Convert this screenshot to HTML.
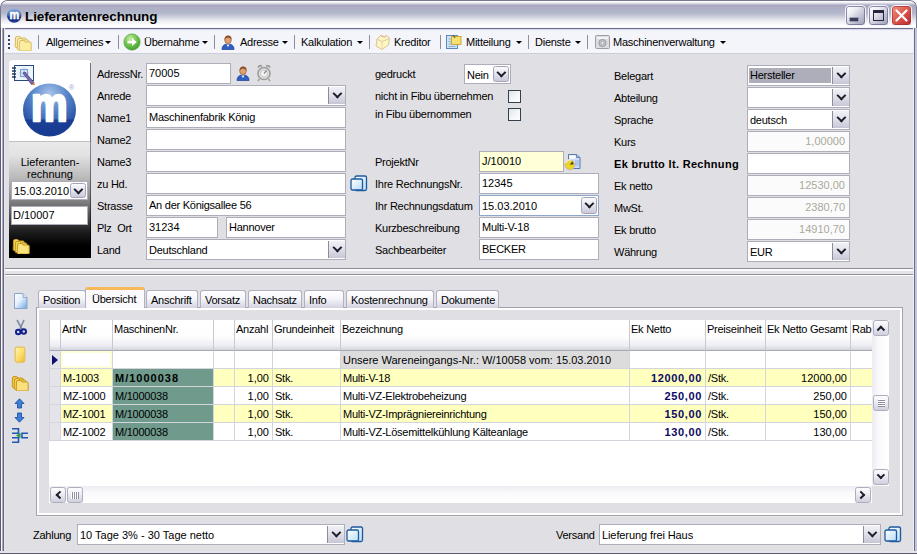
<!DOCTYPE html>
<html><head><meta charset="utf-8"><title>Lieferantenrechnung</title>
<style>
*{box-sizing:border-box;margin:0;padding:0}
html,body{width:917px;height:556px;overflow:hidden;background:#fff}
body{font-family:"Liberation Sans","DejaVu Sans",sans-serif;font-size:11px;color:#000;position:relative;letter-spacing:-0.25px}
.a{position:absolute}
#win{left:0;top:0;width:917px;height:554px;background:#e0dfe3;border-radius:7px 7px 0 0;overflow:hidden}
#frameL{left:0;top:0;width:5px;height:554px;background:linear-gradient(90deg,#5a5a70 0,#5a5a70 1px,#fafaff 1px,#fafaff 2px,#a8a8c0 2px,#a8a8c0 3px,#68687e 3px,#68687e 4px,#e6e6ea 4px)}
#frameR{left:913px;top:0;width:4px;height:554px;background:linear-gradient(90deg,#ececf5 0,#ececf5 1px,#6c6c84 1px,#6c6c84 2px,#c4c4da 2px)}
#frameB{left:0;top:551px;width:917px;height:3px;background:linear-gradient(180deg,#e4e4ea 0,#e4e4ea 2px,#5c5c6c 2px,#5c5c6c 3px)}
#title{left:0;top:0;width:917px;height:29px;border-radius:7px 7px 0 0;border:1px solid #77778e;border-bottom:none;background:linear-gradient(180deg,#fdfdfe 0,#fdfdfe 1px,#e0e0ec 2px,#bebed2 3.500px,#a6a6be 4.500px,#adadc6 6px,#b2b8ca 12px,#c4c6d6 14.500px,#d8d8e2 17px,#e9e9f0 19.500px,#f7f7fa 22.500px,#fff 24.500px,#fff 25.500px,#f0f0f6 27px,#70708a 27px,#70708a 28px)}
#title .t{left:24px;top:8px;font-weight:bold;font-size:13.5px;letter-spacing:-0.1px;color:#000;white-space:nowrap}
#tb{left:4px;top:29px;width:909px;height:25px;background:linear-gradient(180deg,#d6d6ea 0,#d6d6ea 1px,#f1f1f9 1.500px,#f4f4fb 3px,#f4f4fb 21px,#f8f8fe 23px,#ebebf3 24px,#cfcfdb 24px,#cfcfdb 25px)}
.tt{position:absolute;top:36px;line-height:13px;white-space:nowrap}
.sep{position:absolute;top:35px;width:1px;height:14px;background:#8d8d9c}
.arr{position:absolute;top:41px;width:0;height:0;border-left:3px solid transparent;border-right:3px solid transparent;border-top:3px solid #000}
.lbl{position:absolute;white-space:nowrap;line-height:13px}
.in{position:absolute;background:#fff;border:1px solid #aeaeba;height:21px;line-height:19px;padding-left:2px;white-space:nowrap;overflow:hidden}
.n{letter-spacing:0}
.in.ro{letter-spacing:0;color:#a9a99d;text-align:right;padding-right:4px;background:#fbfbfb}
.cb{position:absolute;width:17px;height:17px;border-left:1px solid #8c8c9c;background:linear-gradient(180deg,#f0f0f6 0,#e2e2ec 45%,#c6c6d6 100%)}
.cb.rb{width:16px;border:1px solid #a4a4b8;border-radius:2.500px;background:linear-gradient(180deg,#fafafd 0,#e4e4ee 50%,#c8c8da 100%)}
.cb.rb:after{left:3.700px;top:1.600px}
.cb:after{content:"";box-sizing:border-box;position:absolute;left:4.700px;top:2.600px;width:6.800px;height:6.800px;border-right:2.600px solid #1e1e2a;border-bottom:2.600px solid #1e1e2a;transform:rotate(45deg)}
.chk{position:absolute;width:13px;height:13px;border:1px solid #33414f;background:linear-gradient(135deg,#dde4e9 0,#f2f5f7 50%,#fff 100%)}
.tab{position:absolute;top:290px;height:18px;line-height:18px;text-align:left;padding-left:4px;white-space:nowrap;border:1px solid #b0b0c0;border-bottom:none;border-radius:3px 3px 0 0;background:linear-gradient(180deg,#fff 0,#f6f6fa 45%,#d2d2e0 100%)}
.tab.act{top:287px;height:21px;line-height:19px;background:#fafafc;border-top:3px solid #f6b858;z-index:2;border-bottom:none}
.hc{position:absolute;top:320px;height:31px;line-height:13px;padding:3px 0 0 1px;white-space:nowrap;overflow:hidden;border-left:1px solid #c8c8d2;border-bottom:1px solid #a8a8b8}
.gc{position:absolute;line-height:18px;padding-left:2px;white-space:nowrap;overflow:hidden;border-left:1px solid #d4d4dc;border-bottom:1px solid #d4d4dc;font-size:11px}
.sbb{position:absolute;width:16px;height:16px;border:1px solid #adadbd;border-radius:2.500px;background:linear-gradient(180deg,#fdfdfe 0,#ececf3 45%,#cfcfde 100%)}
.ch{position:absolute;left:4.100px;top:4.100px;width:5.800px;height:5.800px;border-right:2.300px solid #1e1e2a;border-bottom:2.300px solid #1e1e2a}
.ch.dn{top:1.800px;transform:rotate(45deg)}
.ch.up{top:5.700px;transform:rotate(-135deg)}
.ch.lf{left:5.700px;transform:rotate(135deg)}
.ch.rt{left:2px;transform:rotate(-45deg)}
.grip{position:absolute}
.grip.h{left:4px;top:3px;width:7px;height:8px;background:repeating-linear-gradient(180deg,#fff 0,#fff 1px,#8e8e9e 1px,#8e8e9e 2px)}
.grip.v{left:3px;top:4px;width:8px;height:7px;background:repeating-linear-gradient(90deg,#fff 0,#fff 1px,#8e8e9e 1px,#8e8e9e 2px)}
.wb{position:absolute;top:5px;width:21px;height:21px;border:1px solid #f4f4fa;border-radius:4px;background:linear-gradient(135deg,#fff 0,#f0f0f6 30%,#c2c2d4 65%,#9a9ab6 100%);box-shadow:inset 0 0 0 1px rgba(110,110,145,.8)}
.wb.cl{background:linear-gradient(135deg,#f09a84 0,#e2685a 35%,#cc3c3c 75%,#b42a30 100%);box-shadow:inset 0 0 0 1px rgba(160,50,50,.7)}
</style></head><body>
<div id="win" class="a">
<div id="title" class="a"><div class="t a">Lieferantenrechnung</div></div>
<div id="tb" class="a"></div>
<div class="sep" style="left:38px"></div>
<div class="sep" style="left:118px"></div>
<div class="sep" style="left:214px"></div>
<div class="sep" style="left:294px"></div>
<div class="sep" style="left:369px"></div>
<div class="sep" style="left:440px"></div>
<div class="sep" style="left:528px"></div>
<div class="sep" style="left:587px"></div>
<div class="tt" style="left:46px">Allgemeines</div>
<div class="arr" style="left:105px"></div>
<div class="tt" style="left:144px">Übernahme</div>
<div class="arr" style="left:202px"></div>
<div class="tt" style="left:240px">Adresse</div>
<div class="arr" style="left:282px"></div>
<div class="tt" style="left:301px">Kalkulation</div>
<div class="arr" style="left:357px"></div>
<div class="tt" style="left:394px">Kreditor</div>
<div class="tt" style="left:466px">Mitteilung</div>
<div class="arr" style="left:516px"></div>
<div class="tt" style="left:535px">Dienste</div>
<div class="arr" style="left:575px"></div>
<div class="tt" style="left:613px">Maschinenverwaltung</div>
<div class="arr" style="left:720px"></div>
<div class="lbl" style="left:97px;top:68px;">AdressNr.</div>
<div class="lbl" style="left:97px;top:90px;">Anrede</div>
<div class="lbl" style="left:97px;top:112px;">Name1</div>
<div class="lbl" style="left:97px;top:134px;">Name2</div>
<div class="lbl" style="left:97px;top:156px;">Name3</div>
<div class="lbl" style="left:97px;top:178px;">zu Hd.</div>
<div class="lbl" style="left:97px;top:200px;">Strasse</div>
<div class="lbl" style="left:97px;top:222px;">Plz&nbsp; Ort</div>
<div class="lbl" style="left:97px;top:244px;">Land</div>
<div class="in " style="left:146px;top:63px;width:85px;height:21px;"><span class="n">70005</span></div>
<div class="in " style="left:146px;top:85px;width:200px;height:21px;line-height:21px;"></div>
<div class="cb" style="left:328px;top:87px;height:17px"></div>
<div class="in " style="left:146px;top:107px;width:200px;height:21px;">Maschinenfabrik König</div>
<div class="in " style="left:146px;top:129px;width:200px;height:21px;"></div>
<div class="in " style="left:146px;top:151px;width:200px;height:21px;"></div>
<div class="in " style="left:146px;top:173px;width:200px;height:21px;"></div>
<div class="in " style="left:146px;top:195px;width:200px;height:21px;">An der Königsallee 56</div>
<div class="in " style="left:146px;top:217px;width:72px;height:21px;"><span class="n">31234</span></div>
<div class="in " style="left:226px;top:217px;width:120px;height:21px;">Hannover</div>
<div class="in " style="left:146px;top:239px;width:200px;height:21px;line-height:21px;">Deutschland</div>
<div class="cb" style="left:328px;top:241px;height:17px"></div>
<div class="lbl" style="left:375px;top:68px;">gedruckt</div>
<div class="in " style="left:464px;top:64px;width:47px;height:20px;line-height:20px;">Nein</div>
<div class="cb rb" style="left:493px;top:66px;height:16px"></div>
<div class="lbl" style="left:375px;top:90px;">nicht in Fibu übernehmen</div>
<div class="chk" style="left:508px;top:90px"></div>
<div class="lbl" style="left:375px;top:108px;">in Fibu übernommen</div>
<div class="chk" style="left:508px;top:108px"></div>
<div class="lbl" style="left:375px;top:156px;">ProjektNr</div>
<div class="lbl" style="left:375px;top:178px;">Ihre RechnungsNr.</div>
<div class="lbl" style="left:375px;top:200px;">Ihr Rechnungsdatum</div>
<div class="lbl" style="left:375px;top:222px;">Kurzbeschreibung</div>
<div class="lbl" style="left:375px;top:244px;">Sachbearbeiter</div>
<div class="in " style="left:479px;top:151px;width:85px;height:21px;background:#ffffd8"><span class="n">J/10010</span></div>
<div class="in " style="left:479px;top:173px;width:120px;height:21px;"><span class="n">12345</span></div>
<div class="in " style="left:479px;top:195px;width:120px;height:21px;line-height:21px;border-color:#8fa6cc;"><span class="n">15.03.2010</span></div>
<div class="cb rb" style="left:581px;top:197px;height:17px"></div>
<div class="in " style="left:479px;top:217px;width:120px;height:21px;">Multi-V-18</div>
<div class="in " style="left:479px;top:239px;width:120px;height:21px;">BECKER</div>
<div class="lbl" style="left:614px;top:70px;">Belegart</div>
<div class="lbl" style="left:614px;top:92px;">Abteilung</div>
<div class="lbl" style="left:614px;top:114px;">Sprache</div>
<div class="lbl" style="left:614px;top:136px;">Kurs</div>
<div class="lbl" style="left:614px;top:158px;"><b style="letter-spacing:.32px">Ek brutto lt. Rechnung</b></div>
<div class="lbl" style="left:614px;top:180px;">Ek netto</div>
<div class="lbl" style="left:614px;top:202px;">MwSt.</div>
<div class="lbl" style="left:614px;top:224px;">Ek brutto</div>
<div class="lbl" style="left:614px;top:246px;">Währung</div>
<div class="in " style="left:747px;top:65px;width:103px;height:21px;line-height:21px;"><span style="background:#aeaebb;display:inline-block;width:82px;height:15px;line-height:15px;margin:2px 0 0 -1px;padding-left:1px;vertical-align:top">Hersteller</span></div>
<div class="cb" style="left:832px;top:67px;height:17px"></div>
<div class="in " style="left:747px;top:87px;width:103px;height:21px;line-height:21px;"></div>
<div class="cb" style="left:832px;top:89px;height:17px"></div>
<div class="in " style="left:747px;top:109px;width:103px;height:21px;line-height:21px;">deutsch</div>
<div class="cb" style="left:832px;top:111px;height:17px"></div>
<div class="in ro" style="left:747px;top:131px;width:103px;height:21px;">1,00000</div>
<div class="in " style="left:747px;top:153px;width:103px;height:21px;"></div>
<div class="in ro" style="left:747px;top:175px;width:103px;height:21px;">12530,00</div>
<div class="in ro" style="left:747px;top:197px;width:103px;height:21px;">2380,70</div>
<div class="in ro" style="left:747px;top:219px;width:103px;height:21px;">14910,70</div>
<div class="in " style="left:747px;top:241px;width:103px;height:21px;line-height:21px;">EUR</div>
<div class="cb" style="left:832px;top:243px;height:17px"></div>
<svg class="a" style="left:6px;top:6.500px" width="17" height="17" viewBox="0 0 17 17"><defs><linearGradient id="ti" x1="0" y1="0" x2="0" y2="1"><stop offset="0" stop-color="#8fb0e0"/><stop offset=".5" stop-color="#3c62b0"/><stop offset=".62" stop-color="#16307c"/><stop offset="1" stop-color="#1c3a90"/></linearGradient></defs><circle cx="8.2" cy="8.6" r="7.2" fill="url(#ti)"/><text x="8.2" y="12" text-anchor="middle" font-family="Liberation Sans,sans-serif" font-weight="bold" font-size="13" fill="#fff" stroke="#fff" stroke-width=".6" textLength="9.5" lengthAdjust="spacingAndGlyphs">m</text></svg>
<div class="wb" style="left:845px"><i style="position:absolute;left:4px;top:12px;width:8px;height:3px;background:#3c3c5a;box-shadow:0 0 0 .5px #6a6a88"></i></div>
<div class="wb" style="left:868px"><i style="position:absolute;left:4px;top:4px;width:11px;height:11px;border:1px solid #26263e;border-top-width:3px"></i></div>
<div class="wb cl" style="left:891px"><svg width="19" height="19" viewBox="0 0 19 19" style="position:absolute;left:0;top:0"><path d="M4.5 4.5L14.5 14.5M14.5 4.5L4.5 14.5" stroke="#fff" stroke-width="2.2" stroke-linecap="round"/></svg></div>
<div class="a" style="left:8px;top:35px;width:2px;height:14px;background:repeating-linear-gradient(180deg,#3e3e60 0,#3e3e60 2px,transparent 2px,transparent 4px)"></div>
<svg class="a" style="left:14px;top:34.5px" width="18" height="16" viewBox="0 0 18 16"><g stroke="#d8bb5e" stroke-width="1"><path d="M1.5 3.0q0-1.500 1.500-1.500h2.800l1.200 1.500h4q1.200 0 1.200 1.200v7.3q0 1-1 1h-9q-1 0-1-1z" fill="#f9efb4"/><path d="M3.5 5.0q0-1.500 1.500-1.500h2.800l1.200 1.500h4.5q1.200 0 1.200 1.200v7.3q0 1-1 1h-9.5q-1 0-1-1z" fill="#faf1ba"/><path d="M5.5 7.0q0-1.500 1.500-1.500h2.800l1.200 1.500h5q1.200 0 1.200 1.200v6.8q0 1-1 1h-10q-1 0-1-1z" fill="#fbeea0"/></g></svg>
<svg class="a" style="left:123px;top:33px" width="18" height="18" viewBox="0 0 18 18"><defs><radialGradient id="gg" cx="40%" cy="30%" r="75%"><stop offset="0" stop-color="#c6eea4"/><stop offset=".5" stop-color="#74c452"/><stop offset="1" stop-color="#3c9c2c"/></radialGradient></defs><circle cx="9" cy="9" r="8.2" fill="url(#gg)" stroke="#58a840" stroke-width=".6"/><path d="M4.500 7.800h4.500v-2.800l4.800 4-4.800 4v-2.800h-4.500z" fill="#fff"/></svg>
<svg class="a" style="left:221px;top:35px" width="14" height="15" viewBox="0 0 14 15"><path d="M1 14.500c0-3.500 2-5.500 6-5.500s6 2 6 5.500z" fill="#2f5fc0" stroke="#1c3c90" stroke-width=".7"/><path d="M5.500 9.500l1.500 2.500 1.500-2.500z" fill="#fff"/><circle cx="7" cy="5.200" r="3.300" fill="#e0a070" stroke="#8a5030" stroke-width=".6"/><path d="M3.600 5c-.3-3.500 2-4.500 3.600-4.500s3.800 1 3.300 4.300c-1-1.800-2.500-2.300-3.500-2.300s-2.500.6-3.400 2.500z" fill="#8a4a22"/></svg>
<svg class="a" style="left:374px;top:33px" width="18" height="18" viewBox="0 0 18 18"><path d="M3 6l3.500-3.500 4 1.500 2-1.500 3 2.500-1 7-6.500 4.500-6-3.500z" fill="#fbf6c4" stroke="#d8c48c" stroke-width="1"/><path d="M3 6l5 2.500 7.500-3" fill="none" stroke="#e0c8a0" stroke-width="1"/><path d="M8 8.500v7" stroke="#ead9a8" stroke-width="1"/><path d="M6.500 2.500l4 1.500 2-1.500" fill="none" stroke="#e0a8a0" stroke-width="1"/></svg>
<svg class="a" style="left:445px;top:34px" width="17" height="16" viewBox="0 0 17 16"><rect x="1.500" y="1.500" width="11" height="13" fill="#cfe2f6" stroke="#5a88c0"/><path d="M3.500 5h5M3.500 7.500h5M3.500 10h5M3.500 12.500h7" stroke="#8ab0dc" stroke-width="1"/><rect x="6.500" y="2.500" width="9.500" height="8" fill="#f8e070" stroke="#c8a838"/><path d="M8 1l2 3" stroke="#806020" stroke-width="1.200"/></svg>
<svg class="a" style="left:595px;top:35px" width="15" height="14" viewBox="0 0 15 14"><rect x=".5" y=".5" width="14" height="13" rx="1" fill="#dcdce0" stroke="#9c9ca4"/><rect x="2" y="2" width="11" height="2" fill="#f4f4f6"/><circle cx="7.500" cy="8" r="3.600" fill="#c4c4cc" stroke="#8c8c98" stroke-width=".8"/><circle cx="7.500" cy="8" r="1.600" fill="#e8e8ee" stroke="#9a9aa6" stroke-width=".6"/></svg>
<div class="a" style="left:9px;top:60px;width:82px;height:198px;border-radius:4px 4px 0 0;background:linear-gradient(180deg,#fff 0,#fff 81px,#9a9aa0 81px,#e9e9ea 82px,#e2e2e3 95px,#b9b9ba 118px,#8a8a8b 138px,#4a4a4a 158px,#1c1c1c 172px,#000 186px)"></div>
<svg class="a" style="left:20px;top:80px" width="62" height="60" viewBox="0 0 62 60"><defs><radialGradient id="lg" cx="50%" cy="20%" r="85%"><stop offset="0" stop-color="#a8c4ea"/><stop offset=".4" stop-color="#5584c8"/><stop offset=".75" stop-color="#2a56a8"/><stop offset="1" stop-color="#163888"/></radialGradient></defs><circle cx="29.500" cy="30" r="26.500" fill="url(#lg)"/><path d="M5.300 39.500A26.500 26.500 0 0 0 53.700 39.500Z" fill="#173a90" opacity=".85"/><text x="29.300" y="40.800" text-anchor="middle" font-family="Liberation Sans,sans-serif" font-weight="bold" font-size="48.500" fill="#fff" stroke="#fff" stroke-width="2.600" stroke-linejoin="round" textLength="36.400" lengthAdjust="spacingAndGlyphs">m</text><text x="49" y="9.500" font-family="Liberation Sans,sans-serif" font-size="7" fill="#9aa8c4">®</text></svg>
<div class="lbl" style="left:9px;top:156px;width:82px;text-align:center;line-height:12px;white-space:normal;letter-spacing:0">Lieferanten-<br>rechnung</div>
<div class="in " style="left:11px;top:181px;width:77px;height:19px;line-height:19px;"><span class="n">15.03.2010</span></div>
<div class="cb rb" style="left:70px;top:183px;height:15px"></div>
<div class="in " style="left:11px;top:206px;width:77px;height:19px;line-height:16px;padding-left:1px"><span class="n">D/10007</span></div>
<div class="a" style="left:90px;top:63px;width:1px;height:195px;background:linear-gradient(180deg,#74747c 0,#74747c 78px,#8a8a90 80px,#55555a 130px,#000 175px)"></div>
<svg class="a" style="left:11px;top:64px" width="26" height="24" viewBox="0 0 26 24"><rect x="3.500" y="1.500" width="19" height="15" fill="#eef4fc" stroke="#2c4a78" stroke-width="1"/><path d="M1 4h4M1 7h4M1 10h4M1 13h4" stroke="#223a60" stroke-width="1.400"/><rect x="9.500" y="5.500" width="7" height="7" fill="#d6e6f8" stroke="#7a9cc8"/><path d="M8 9h10M13 4v10" stroke="#9ab4d8" stroke-width=".8"/><path d="M12 9l2-1 9 10.500-2.500 2z" fill="#7a6ab0" stroke="#3c3470" stroke-width=".7"/><path d="M20.500 20.500l2.500-2 1 2.500z" fill="#e06820"/></svg>
<svg class="a" style="left:236px;top:66px" width="14" height="15" viewBox="0 0 14 15"><path d="M1 14.500c0-3.500 2-5.500 6-5.500s6 2 6 5.500z" fill="#2f5fc0" stroke="#1c3c90" stroke-width=".7"/><path d="M5.500 9.500l1.500 2.500 1.500-2.500z" fill="#fff"/><circle cx="7" cy="5.200" r="3.300" fill="#e0a070" stroke="#8a5030" stroke-width=".6"/><path d="M3.600 5c-.3-3.500 2-4.500 3.600-4.500s3.800 1 3.300 4.300c-1-1.800-2.500-2.300-3.500-2.300s-2.500.6-3.400 2.500z" fill="#8a4a22"/></svg>
<svg class="a" style="left:256px;top:64px" width="16" height="18" viewBox="0 0 16 18"><g fill="none" stroke="#9c9c9c"><circle cx="8" cy="9.500" r="6" fill="#e4e4e4" stroke-width="1.600"/><circle cx="8" cy="9.500" r="3.600" fill="#f2f2f2" stroke="#b8b8b8" stroke-width=".8"/><path d="M8 9.500l2.500-3" stroke="#8a8a8a" stroke-width="1.200"/><path d="M2 3.500q1.500-2.500 4-1.500M14 3.500q-1.500-2.500-4-1.500" stroke-width="1.800"/><path d="M3.500 15l-1.500 2M12.500 15l1.500 2" stroke-width="1.400"/></g></svg>
<svg class="a" style="left:350px;top:175px" width="18" height="17" viewBox="0 0 18 17"><defs><linearGradient id="cp1" x1="0" y1="0" x2="1" y2="1"><stop offset="0" stop-color="#fff"/><stop offset="1" stop-color="#b8dcf8"/></linearGradient></defs><rect x="5" y="1" width="11.500" height="14.500" rx="1.500" fill="url(#cp1)" stroke="#1c5a9e" stroke-width="1.300"/><rect x="1" y="4" width="11.500" height="11" rx="1.500" fill="url(#cp1)" stroke="#1c5a9e" stroke-width="1.300"/></svg>
<svg class="a" style="left:346px;top:526px" width="18" height="17" viewBox="0 0 18 17"><defs><linearGradient id="cp2" x1="0" y1="0" x2="1" y2="1"><stop offset="0" stop-color="#fff"/><stop offset="1" stop-color="#b8dcf8"/></linearGradient></defs><rect x="5" y="1" width="11.500" height="14.500" rx="1.500" fill="url(#cp2)" stroke="#1c5a9e" stroke-width="1.300"/><rect x="1" y="4" width="11.500" height="11" rx="1.500" fill="url(#cp2)" stroke="#1c5a9e" stroke-width="1.300"/></svg>
<svg class="a" style="left:884px;top:526px" width="18" height="17" viewBox="0 0 18 17"><defs><linearGradient id="cp3" x1="0" y1="0" x2="1" y2="1"><stop offset="0" stop-color="#fff"/><stop offset="1" stop-color="#b8dcf8"/></linearGradient></defs><rect x="5" y="1" width="11.500" height="14.500" rx="1.500" fill="url(#cp3)" stroke="#1c5a9e" stroke-width="1.300"/><rect x="1" y="4" width="11.500" height="11" rx="1.500" fill="url(#cp3)" stroke="#1c5a9e" stroke-width="1.300"/></svg>
<svg class="a" style="left:564px;top:153px" width="17" height="18" viewBox="0 0 17 18"><path d="M4.500 1.500h8l3.500 3v11h-11.500z" fill="#cfe0f6" stroke="#5878a8" stroke-width="1"/><path d="M12.500 1.500v3h3.500" fill="#9cb8e0" stroke="#5878a8" stroke-width=".8"/><rect x="5.500" y="2.500" width="6" height="3" fill="#fff"/><path d="M11 8h4M11 10h4M11 12h4" stroke="#8cb0e0" stroke-width="1"/><circle cx="5.800" cy="11.800" r="5" fill="#ead424" stroke="#c8b8b0" stroke-width="1"/><path d="M5.800 11.800l2.500-3.500 1.500 3z" fill="#50401c"/><path d="M1.500 10a5 5 0 0 1 6-3" fill="none" stroke="#f4e8e8" stroke-width="1.500"/></svg>
<svg class="a" style="left:12px;top:238px" width="18" height="16" viewBox="0 0 18 16"><g stroke="#c49a20" stroke-width="1"><path d="M1.5 3.0q0-1.500 1.500-1.500h2.800l1.200 1.500h4q1.200 0 1.200 1.200v7.3q0 1-1 1h-9q-1 0-1-1z" fill="#f4d254"/><path d="M3.5 5.0q0-1.500 1.500-1.500h2.800l1.200 1.500h4.5q1.200 0 1.200 1.200v7.3q0 1-1 1h-9.5q-1 0-1-1z" fill="#f6d860"/><path d="M5.5 7.0q0-1.500 1.500-1.500h2.800l1.200 1.500h5q1.200 0 1.200 1.200v6.8q0 1-1 1h-10q-1 0-1-1z" fill="#fae27c"/></g></svg>
<svg class="a" style="left:13px;top:292px" width="16" height="18" viewBox="0 0 16 18"><defs><linearGradient id="pg" x1="0" y1="0" x2="1" y2="1"><stop offset="0" stop-color="#fff"/><stop offset=".45" stop-color="#e4f0fc"/><stop offset="1" stop-color="#6aa4e4"/></linearGradient></defs><path d="M1.500 1.500h8.500l4 4v11h-12.500z" fill="url(#pg)" stroke="#8aa4cc" stroke-width="1"/><path d="M10 1.500v4h4" fill="#dce8f8" stroke="#8aa4cc" stroke-width=".9"/></svg>
<svg class="a" style="left:14px;top:319px" width="14" height="17" viewBox="0 0 14 17"><path d="M3 1l5.500 10M10 1l-4.500 10" stroke="#7c8ca8" stroke-width="1.600" fill="none"/><circle cx="4.200" cy="13" r="2.200" fill="none" stroke="#10208c" stroke-width="2"/><circle cx="9.800" cy="12.500" r="2.200" fill="none" stroke="#10208c" stroke-width="2"/></svg>
<svg class="a" style="left:14px;top:346px" width="12" height="18" viewBox="0 0 12 18"><defs><linearGradient id="yn" x1="0" y1="0" x2="1" y2="1"><stop offset="0" stop-color="#fff4b0"/><stop offset=".5" stop-color="#fbe070"/><stop offset="1" stop-color="#f0b830"/></linearGradient></defs><rect x="1.200" y="1.200" width="9.600" height="15" rx="1.800" fill="url(#yn)" stroke="#e8c050" stroke-width="1.200"/></svg>
<svg class="a" style="left:11px;top:375px" width="18" height="16" viewBox="0 0 18 16"><g stroke="#c8961c" stroke-width="1"><path d="M1.5 3.0q0-1.500 1.500-1.500h2.800l1.200 1.500h4q1.200 0 1.200 1.200v7.3q0 1-1 1h-9q-1 0-1-1z" fill="#f5cc4a"/><path d="M3.5 5.0q0-1.500 1.500-1.500h2.800l1.200 1.500h4.5q1.200 0 1.200 1.200v7.3q0 1-1 1h-9.5q-1 0-1-1z" fill="#f7d45a"/><path d="M5.5 7.0q0-1.500 1.500-1.500h2.800l1.200 1.500h5q1.200 0 1.200 1.200v6.8q0 1-1 1h-10q-1 0-1-1z" fill="#fbe080"/></g></svg>
<svg class="a" style="left:14px;top:398px" width="11" height="11" viewBox="0 0 11 11"><path d="M5.500 .8l4.500 4.700h-2.500v4.500h-4v-4.500h-2.500z" fill="#3f7fd6" stroke="#1c50a8" stroke-width=".9" stroke-linejoin="round"/></svg>
<svg class="a" style="left:14px;top:412px" width="11" height="11" viewBox="0 0 11 11"><path d="M5.500 10.200l4.500-4.700h-2.500v-4.500h-4v4.500h-2.500z" fill="#3f7fd6" stroke="#1c50a8" stroke-width=".9" stroke-linejoin="round"/></svg>
<svg class="a" style="left:11px;top:427px" width="18" height="17" viewBox="0 0 18 17"><g fill="none" stroke="#2058b8" stroke-width="1.600"><path d="M1 1.800h6.500v4.400h-6.500"/><path d="M1 10.800h6.500v4.400h-6.500"/><path d="M17 6.300h-6v4.400h6"/></g><path d="M5 8.500l4.500-2.800v5.600z" fill="#2c9c3c"/></svg>
<div class="a" style="left:4px;top:268px;width:909px;height:8px;background:linear-gradient(180deg,#8e8e98 0,#8e8e98 1px,#fbfbfd 1px,#fbfbfd 3px,#e4e3e7 3px,#e4e3e7 6px,#8e8e98 6px,#8e8e98 7px,#fdfdfd 7px)"></div>
<div class="a" style="left:36px;top:307px;width:867px;height:209px;background:#e0dfe3;border:1px solid #a2a2aa;box-shadow:inset 2px 2px 0 #fff,inset -2px -2px 0 #fff,0 1px 0 #e9e9eb"></div>
<div class="tab" style="left:38px;width:48px">Position</div>
<div class="tab" style="left:146px;width:52px">Anschrift</div>
<div class="tab" style="left:200px;width:46px">Vorsatz</div>
<div class="tab" style="left:248px;width:54px">Nachsatz</div>
<div class="tab" style="left:304px;width:40px">Info</div>
<div class="tab" style="left:346px;width:88px">Kostenrechnung</div>
<div class="tab" style="left:436px;width:63px">Dokumente</div>
<div class="tab act" style="left:85px;width:60px;padding-left:6px">Übersicht</div>
<div class="a" style="left:49px;top:320px;width:840px;height:183px;background:#fff"></div>
<div class="a" style="left:49px;top:320px;width:823px;height:31px;background:linear-gradient(180deg,#fff 0,#fdfdfe 55%,#ededf3 82%,#d4d4de 97%,#d4d4de 100%)"></div>
<div class="hc" style="left:49px;width:11px"></div>
<div class="hc" style="left:60px;width:52px">ArtNr</div>
<div class="hc" style="left:112px;width:101px">MaschinenNr.</div>
<div class="hc" style="left:213px;width:21px"></div>
<div class="hc" style="left:234px;width:38px">Anzahl</div>
<div class="hc" style="left:272px;width:68px">Grundeinheit</div>
<div class="hc" style="left:340px;width:289px">Bezeichnung</div>
<div class="hc" style="left:629px;width:76px">Ek Netto</div>
<div class="hc" style="left:705px;width:60px">Preiseinheit</div>
<div class="hc" style="left:765px;width:85px">Ek Netto Gesamt</div>
<div class="hc" style="left:850px;width:22px">Rab</div>
<div class="gc" style="left:49px;top:351px;width:11px;height:18px;background:#e4e4ea;"></div>
<div class="gc" style="left:60px;top:351px;width:52px;height:18px;background:#fff;box-shadow:inset 0 0 0 2px #fdfdd6;"></div>
<div class="gc" style="left:112px;top:351px;width:101px;height:18px;background:#fff;"></div>
<div class="gc" style="left:213px;top:351px;width:21px;height:18px;background:#fff;"></div>
<div class="gc" style="left:234px;top:351px;width:38px;height:18px;background:#fff;text-align:right;padding-right:3px;letter-spacing:0;"></div>
<div class="gc" style="left:272px;top:351px;width:68px;height:18px;background:#fff;"></div>
<div class="gc" style="left:340px;top:351px;width:289px;height:18px;background:#dcdcdc;"><span class="n">Unsere Wareneingangs-Nr.: W/10058 vom: 15.03.2010</span></div>
<div class="gc" style="left:629px;top:351px;width:76px;height:18px;background:#fff;text-align:right;padding-right:3px;font-weight:bold;color:#0a0a64;letter-spacing:.65px;"></div>
<div class="gc" style="left:705px;top:351px;width:60px;height:18px;background:#fff;"></div>
<div class="gc" style="left:765px;top:351px;width:85px;height:18px;background:#fff;text-align:right;padding-right:3px;letter-spacing:0;"></div>
<div class="gc" style="left:850px;top:351px;width:22px;height:18px;background:#fff;"></div>
<div class="gc" style="left:49px;top:369px;width:11px;height:18px;background:#e4e4ea;"></div>
<div class="gc" style="left:60px;top:369px;width:52px;height:18px;background:#ffffbe;">M-1003</div>
<div class="gc" style="left:112px;top:369px;width:101px;height:18px;background:#6f9a8c;"><b style="letter-spacing:1px">M/1000038</b></div>
<div class="gc" style="left:213px;top:369px;width:21px;height:18px;background:#ffffbe;"></div>
<div class="gc" style="left:234px;top:369px;width:38px;height:18px;background:#ffffbe;text-align:right;padding-right:3px;letter-spacing:0;">1,00</div>
<div class="gc" style="left:272px;top:369px;width:68px;height:18px;background:#ffffbe;">Stk.</div>
<div class="gc" style="left:340px;top:369px;width:289px;height:18px;background:#ffffbe;">Multi-V-18</div>
<div class="gc" style="left:629px;top:369px;width:76px;height:18px;background:#ffffbe;text-align:right;padding-right:3px;font-weight:bold;color:#0a0a64;letter-spacing:.65px;">12000,00</div>
<div class="gc" style="left:705px;top:369px;width:60px;height:18px;background:#ffffbe;">/Stk.</div>
<div class="gc" style="left:765px;top:369px;width:85px;height:18px;background:#ffffbe;text-align:right;padding-right:3px;letter-spacing:0;">12000,00</div>
<div class="gc" style="left:850px;top:369px;width:22px;height:18px;background:#ffffbe;"></div>
<div class="gc" style="left:49px;top:387px;width:11px;height:18px;background:#e4e4ea;"></div>
<div class="gc" style="left:60px;top:387px;width:52px;height:18px;background:#fff;">MZ-1000</div>
<div class="gc" style="left:112px;top:387px;width:101px;height:18px;background:#6f9a8c;">M/1000038</div>
<div class="gc" style="left:213px;top:387px;width:21px;height:18px;background:#fff;"></div>
<div class="gc" style="left:234px;top:387px;width:38px;height:18px;background:#fff;text-align:right;padding-right:3px;letter-spacing:0;">1,00</div>
<div class="gc" style="left:272px;top:387px;width:68px;height:18px;background:#fff;">Stk.</div>
<div class="gc" style="left:340px;top:387px;width:289px;height:18px;background:#fff;">Multi-VZ-Elektrobeheizung</div>
<div class="gc" style="left:629px;top:387px;width:76px;height:18px;background:#fff;text-align:right;padding-right:3px;font-weight:bold;color:#0a0a64;letter-spacing:.65px;">250,00</div>
<div class="gc" style="left:705px;top:387px;width:60px;height:18px;background:#fff;">/Stk.</div>
<div class="gc" style="left:765px;top:387px;width:85px;height:18px;background:#fff;text-align:right;padding-right:3px;letter-spacing:0;">250,00</div>
<div class="gc" style="left:850px;top:387px;width:22px;height:18px;background:#fff;"></div>
<div class="gc" style="left:49px;top:405px;width:11px;height:18px;background:#e4e4ea;"></div>
<div class="gc" style="left:60px;top:405px;width:52px;height:18px;background:#ffffbe;">MZ-1001</div>
<div class="gc" style="left:112px;top:405px;width:101px;height:18px;background:#6f9a8c;">M/1000038</div>
<div class="gc" style="left:213px;top:405px;width:21px;height:18px;background:#ffffbe;"></div>
<div class="gc" style="left:234px;top:405px;width:38px;height:18px;background:#ffffbe;text-align:right;padding-right:3px;letter-spacing:0;">1,00</div>
<div class="gc" style="left:272px;top:405px;width:68px;height:18px;background:#ffffbe;">Stk.</div>
<div class="gc" style="left:340px;top:405px;width:289px;height:18px;background:#ffffbe;">Multi-VZ-Imprägniereinrichtung</div>
<div class="gc" style="left:629px;top:405px;width:76px;height:18px;background:#ffffbe;text-align:right;padding-right:3px;font-weight:bold;color:#0a0a64;letter-spacing:.65px;">150,00</div>
<div class="gc" style="left:705px;top:405px;width:60px;height:18px;background:#ffffbe;">/Stk.</div>
<div class="gc" style="left:765px;top:405px;width:85px;height:18px;background:#ffffbe;text-align:right;padding-right:3px;letter-spacing:0;">150,00</div>
<div class="gc" style="left:850px;top:405px;width:22px;height:18px;background:#ffffbe;"></div>
<div class="gc" style="left:49px;top:423px;width:11px;height:18px;background:#e4e4ea;"></div>
<div class="gc" style="left:60px;top:423px;width:52px;height:18px;background:#fff;">MZ-1002</div>
<div class="gc" style="left:112px;top:423px;width:101px;height:18px;background:#6f9a8c;">M/1000038</div>
<div class="gc" style="left:213px;top:423px;width:21px;height:18px;background:#fff;"></div>
<div class="gc" style="left:234px;top:423px;width:38px;height:18px;background:#fff;text-align:right;padding-right:3px;letter-spacing:0;">1,00</div>
<div class="gc" style="left:272px;top:423px;width:68px;height:18px;background:#fff;">Stk.</div>
<div class="gc" style="left:340px;top:423px;width:289px;height:18px;background:#fff;">Multi-VZ-Lösemittelkühlung Kälteanlage</div>
<div class="gc" style="left:629px;top:423px;width:76px;height:18px;background:#fff;text-align:right;padding-right:3px;font-weight:bold;color:#0a0a64;letter-spacing:.65px;">130,00</div>
<div class="gc" style="left:705px;top:423px;width:60px;height:18px;background:#fff;">/Stk.</div>
<div class="gc" style="left:765px;top:423px;width:85px;height:18px;background:#fff;text-align:right;padding-right:3px;letter-spacing:0;">130,00</div>
<div class="gc" style="left:850px;top:423px;width:22px;height:18px;background:#fff;"></div>
<div class="a" style="left:52px;top:355px;width:0;height:0;border-top:5px solid transparent;border-bottom:5px solid transparent;border-left:6px solid #10106c"></div>
<div class="a" style="left:872px;top:320px;width:17px;height:166px;background:linear-gradient(90deg,#ececf2,#fafafc 40%,#fff)"></div>
<div class="sbb" style="left:873px;top:320px"><i class="ch up"></i></div>
<div class="sbb" style="left:873px;top:469px"><i class="ch dn"></i></div>
<div class="sbb" style="left:873px;top:395px"><i class="grip h"></i></div>
<div class="a" style="left:49px;top:486px;width:823px;height:17px;background:linear-gradient(180deg,#ececf2,#fafafc 40%,#fff)"></div>
<div class="a" style="left:872px;top:486px;width:17px;height:17px;background:#e0dfe3"></div>
<div class="sbb" style="left:50px;top:487px"><i class="ch lf"></i></div>
<div class="sbb" style="left:855px;top:487px"><i class="ch rt"></i></div>
<div class="sbb" style="left:67px;top:487px"><i class="grip v"></i></div>
<div class="lbl" style="left:33px;top:529px;">Zahlung</div>
<div class="in " style="left:77px;top:524px;width:268px;height:21px;line-height:21px;"><span class="n">10 Tage 3% - 30 Tage netto</span></div>
<div class="cb" style="left:327px;top:526px;height:17px"></div>
<div class="lbl" style="left:556px;top:529px;">Versand</div>
<div class="in " style="left:599px;top:524px;width:282px;height:21px;line-height:21px;"><span style="letter-spacing:-.1px">Lieferung frei Haus</span></div>
<div class="cb" style="left:863px;top:526px;height:17px"></div>
<div id="frameL" class="a" style="top:28px"></div><div id="frameR" class="a" style="top:28px"></div><div id="frameB" class="a"></div>
</div>
</body></html>
